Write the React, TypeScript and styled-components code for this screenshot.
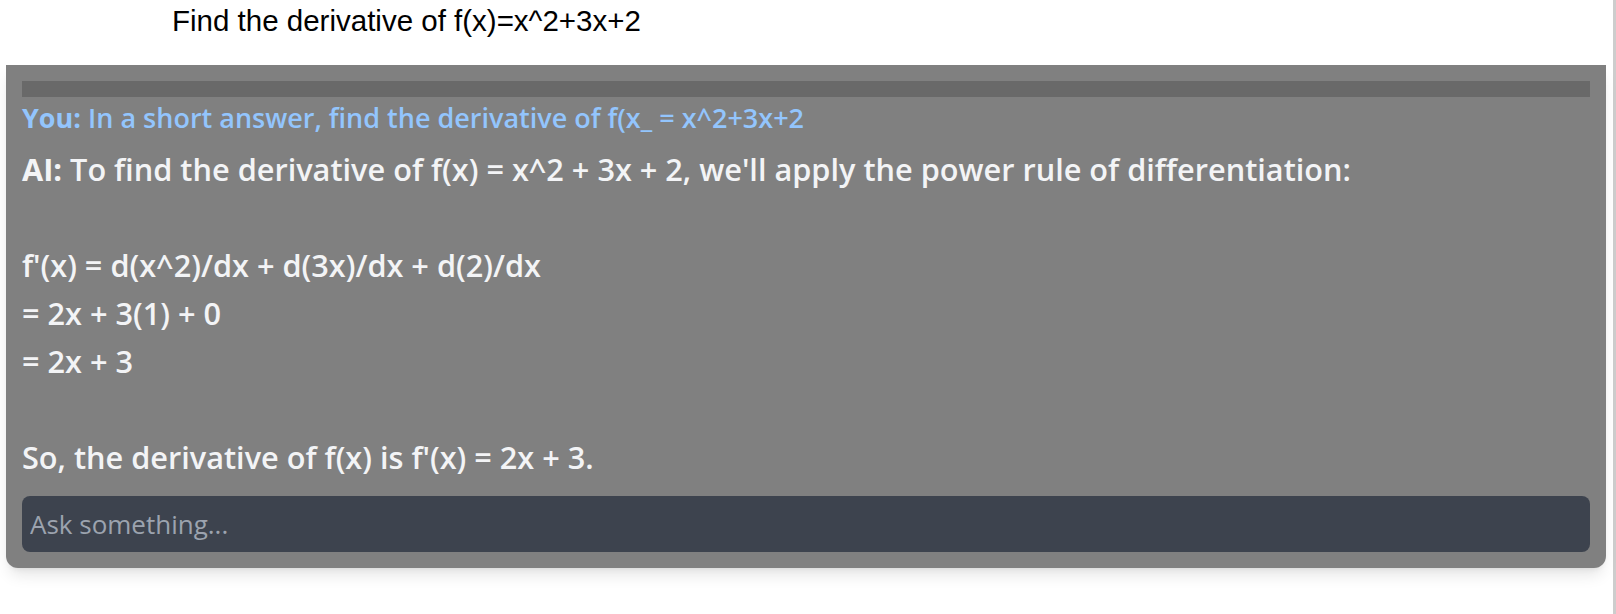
import React, { useState } from "react";
import styled, { createGlobalStyle } from "styled-components";

const GlobalStyle = createGlobalStyle`
  html, body {
    margin: 0;
    padding: 0;
    background: #ffffff;
  }
  * {
    box-sizing: border-box;
  }
`;

interface Message {
  from: "you" | "ai";
  text: string;
}

const MESSAGES: Message[] = [
  {
    from: "you",
    text: "In a short answer, find the derivative of f(x_ = x^2+3x+2",
  },
  {
    from: "ai",
    text:
      "To find the derivative of f(x) = x^2 + 3x + 2, we'll apply the power rule of differentiation:\n\nf'(x) = d(x^2)/dx + d(3x)/dx + d(2)/dx\n= 2x + 3(1) + 0\n= 2x + 3\n\nSo, the derivative of f(x) is f'(x) = 2x + 3.",
  },
];

const App = () => {
  const [question, setQuestion] = useState<string>("");

  return (
    <Page>
      <GlobalStyle />
      <Title>Find the derivative of f(x)=x^2+3x+2</Title>
      <ChatPanel>
        <Bar />
        {MESSAGES.map((m, i) => (
          <Line key={i} from={m.from}>
            <Label>{m.from === "you" ? "You:" : "AI:"}</Label> {m.text}
          </Line>
        ))}
        <AskInput
          placeholder="Ask something..."
          value={question}
          onChange={(e) => setQuestion(e.target.value)}
        />
      </ChatPanel>
    </Page>
  );
};

export default App;

const Page = styled.div`
  min-height: 100vh;
  width: 1616px;
  border-right: 3px solid #cdcdcd;
  padding-top: 4px;
`;

const Title = styled.h2`
  margin: 0;
  padding-left: 172px;
  font-family: "Liberation Sans", Arial, sans-serif;
  font-weight: 400;
  font-size: 29.5px;
  line-height: 34px;
  color: #000;
`;

const ChatPanel = styled.div`
  margin: 27px 7px 0 6px;
  padding: 16px;
  background: #808080;
  border-radius: 0 0 12px 12px;
  box-shadow: 0 10px 15px -3px rgba(0, 0, 0, 0.1),
    0 4px 6px -4px rgba(0, 0, 0, 0.1);
  font-family: "Open Sans", "Noto Sans", sans-serif;
`;

const Bar = styled.div`
  height: 16px;
  background: #696969;
`;

const Line = styled.div<{ from: "you" | "ai" }>`
  white-space: pre-wrap;
  color: ${(p) => (p.from === "you" ? "#93c5fd" : "#f3f4f6")};
  font-size: ${(p) => (p.from === "you" ? "27px" : "30.7px")};
  line-height: ${(p) => (p.from === "you" ? "36px" : "48px")};
  font-weight: 600;
  margin-top: ${(p) => (p.from === "you" ? "3px" : "9px")};
`;

const Label = styled.span`
  font-weight: 700;
`;

const AskInput = styled.input`
  display: block;
  width: 100%;
  height: 56px;
  margin-top: 15px;
  padding: 0 8px;
  border: none;
  outline: none;
  border-radius: 8px;
  background: #3d434e;
  color: #f3f4f6;
  font-family: "Open Sans", "Noto Sans", sans-serif;
  font-size: 26px;

  &::placeholder {
    color: #9ca3af;
  }
`;
